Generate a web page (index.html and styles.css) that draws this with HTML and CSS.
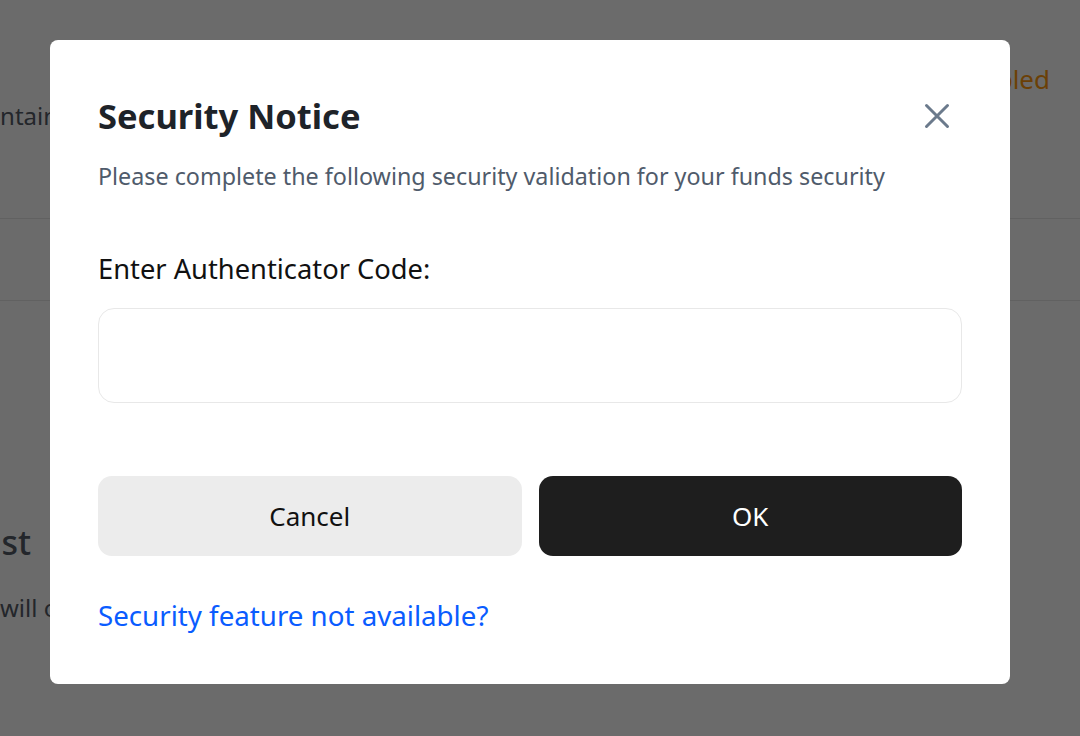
FILE: index.html
```html
<!DOCTYPE html>
<html lang="en">
<head>
  <meta charset="UTF-8" />
  <meta name="viewport" content="width=device-width, initial-scale=1.0" />
  <title>Security Notice</title>
  <link rel="stylesheet" href="styles.css">
</head>
<body>
  <div class="page">
    <div class="page-top">
      <div class="page-top-left">maintain address whitelist</div>
      <div class="page-top-right">Enabled</div>
    </div>
    <div class="page-row"></div>
    <div class="page-section">
      <h2>Whitelist</h2>
      <p>will only go to addresses in the list</p>
    </div>
  </div>

  <div class="mask">
    <div class="modal">
      <div class="modal-head">
        <h1>Security Notice</h1>
        <button class="close" aria-label="Close">
          <svg width="28" height="28" viewBox="0 0 28 28" fill="none">
            <path d="M3.5 3.5L24.5 24.5M24.5 3.5L3.5 24.5" stroke="#6b7a8c" stroke-width="3" stroke-linecap="round" />
          </svg>
        </button>
      </div>
      <p class="subtitle">Please complete the following security validation for your funds security</p>

      <label for="code">Enter Authenticator Code:</label>
      <input type="text" id="code" />

      <div class="actions">
        <button class="btn btn-cancel">Cancel</button>
        <button class="btn btn-ok">OK</button>
      </div>

      <a class="help" href="#">Security feature not available?</a>
    </div>
  </div>
</body>
</html>
```

FILE: styles.css
```css
body {
  margin: 0;
  font-family: "Noto Sans", Arial, sans-serif;
  background-color: #fff;
  overflow: hidden;
}
.page {
  width: 1080px;
  height: 736px;
}
.page-top {
  height: 218px;
  border-bottom: 1px solid #e6e6e6;
  display: flex;
  justify-content: space-between;
}
.page-top-left {
  margin-top: 99px;
  margin-left: -42px;
  font-size: 24px;
  color: #545b66;
  white-space: nowrap;
}
.page-top-right {
  margin-top: 61px;
  margin-right: 30px;
  font-size: 26px;
  color: #ff9a10;
}
.page-row {
  height: 81px;
  border-bottom: 1px solid #e6e6e6;
}
.page-section {
  padding-top: 218px;
  white-space: nowrap;
}
.page-section h2 {
  margin: 0 0 0 -112px;
  font-size: 34px;
  font-weight: 500;
  color: #545b66;
}
.page-section p {
  margin: 26px 0 0;
  font-size: 24px;
  color: #545b66;
}

.mask {
  position: fixed;
  inset: 0;
  background-color: rgba(0, 0, 0, 0.58);
  padding: 40px 70px 0 50px;
}
.modal {
  width: 960px;
  height: 644px;
  box-sizing: border-box;
  padding: 54px 48px 0;
  background-color: #fff;
  border-radius: 8px;
  display: flex;
  flex-direction: column;
}
.modal-head {
  display: flex;
  justify-content: space-between;
  align-items: center;
}
h1 {
  margin: 0;
  font-size: 34.5px;
  line-height: 44px;
  font-weight: 700;
  color: #1e2329;
}
.close {
  border: none;
  background: none;
  padding: 0;
  margin-right: 11px;
  width: 28px;
  height: 28px;
  cursor: pointer;
}
.subtitle {
  margin: 22px 0 0;
  font-size: 23.3px;
  line-height: 32px;
  color: #4f5b6b;
}
label {
  margin-top: 59px;
  font-size: 27.3px;
  line-height: 36px;
  color: #111;
}
input {
  margin-top: 21px;
  height: 95px;
  box-sizing: border-box;
  border: 1.5px solid #e8e8e8;
  border-radius: 16px;
  padding: 0 20px;
  font-size: 24px;
  outline: none;
}
.actions {
  margin-top: 73px;
  display: flex;
  gap: 17px;
}
.btn {
  flex: 1;
  height: 80px;
  border: none;
  border-radius: 14px;
  font-family: inherit;
  font-size: 26px;
  cursor: pointer;
}
.btn-cancel {
  background-color: #ececec;
  color: #111;
}
.btn-ok {
  background-color: #1e1e1e;
  color: #fff;
}
.help {
  margin-top: 40px;
  font-size: 27.7px;
  line-height: 38px;
  color: #0a5cff;
  text-decoration: none;
  align-self: flex-start;
}
```
